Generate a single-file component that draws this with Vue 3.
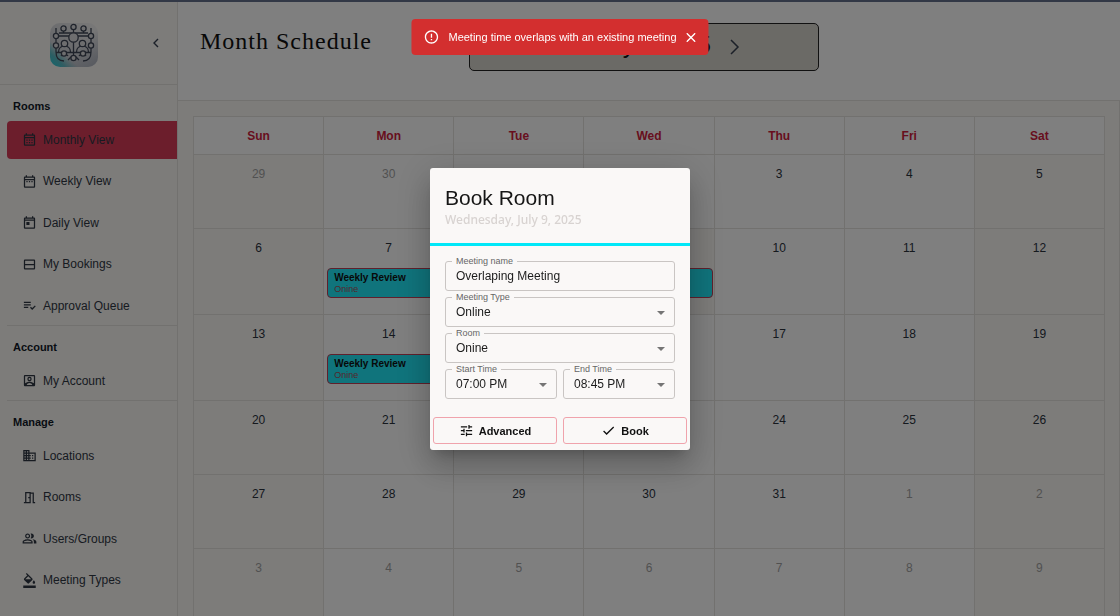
<script setup>
import { ref } from 'vue'

const icons = {
  month: 'M19 4h-1V2h-2v2H8V2H6v2H5c-1.11 0-1.99.9-1.99 2L3 20c0 1.1.89 2 2 2h14c1.1 0 2-.9 2-2V6c0-1.1-.9-2-2-2zm0 16H5V10h14v10zm0-12H5V6h14v2zM9 14H7v-2h2v2zm4 0h-2v-2h2v2zm4 0h-2v-2h2v2zm-8 4H7v-2h2v2zm4 0h-2v-2h2v2zm4 0h-2v-2h2v2z',
  week: 'M7 11h2v2H7v-2zm14-5v14c0 1.1-.9 2-2 2H5c-1.11 0-2-.9-2-2l.01-14c0-1.1.88-2 1.99-2h1V2h2v2h8V2h2v2h1c1.1 0 2 .9 2 2zM5 8h14V6H5v2zm14 12V10H5v10h14zm-4-7h2v-2h-2v2zm-4 0h2v-2h-2v2z',
  day: 'M19 4h-1V2h-2v2H8V2H6v2H5c-1.11 0-1.99.9-1.99 2L3 20c0 1.1.89 2 2 2h14c1.1 0 2-.9 2-2V6c0-1.1-.9-2-2-2zm0 16H5V9h14v11zm0-13H5V6h14v1zM7 11h5v5H7z',
  bookings: 'M19 4H5c-1.1 0-2 .9-2 2v12c0 1.1.9 2 2 2h14c1.1 0 2-.9 2-2V6c0-1.1-.9-2-2-2zM5 6h14v5H5zM5 13h14v5H5z',
  queue: 'M3 10h11v2H3zm0-4h11v2H3zm0 8h7v2H3zm17.59-2.07-4.25 4.24-2.12-2.12-1.41 1.41L16.34 19 22 13.34z',
  account: 'M19 3H5c-1.1 0-2 .9-2 2v14c0 1.1.9 2 2 2h14c1.1 0 2-.9 2-2V5c0-1.100-.9-2-2-2zM5 5h14v11.500C17.200 14.900 14.700 14 12 14s-5.200.9-7 2.500zM7.500 19c1-1.800 2.600-3 4.500-3s3.500 1.200 4.500 3zM12 6a3.500 3.500 0 1 0 0 7 3.500 3.500 0 0 0 0-7zM12 8a1.500 1.500 0 1 1 0 3 1.500 1.500 0 0 1 0-3z',
  locations: 'M12 7V3H2v18h20V7H12zM6 19H4v-2h2v2zm0-4H4v-2h2v2zm0-4H4V9h2v2zm0-4H4V5h2v2zm4 12H8v-2h2v2zm0-4H8v-2h2v2zm0-4H8V9h2v2zm0-4H8V5h2v2zm10 12h-8v-2h2v-2h-2v-2h2v-2h-2V9h8v10zm-2-8h-2v2h2v-2zm0 4h-2v2h2v-2z',
  rooms: 'M14 6v15H3v-2h2V3h9v1h5v15h2v2h-4V6h-3zM7 5v14h5V5zM10 11h2v2h-2z',
  users: 'M16.67 13.13C18.04 14.06 19 15.32 19 17v3h4v-3c0-2.18-3.57-3.47-6.33-3.87zM15 12c2.21 0 4-1.79 4-4s-1.79-4-4-4c-.47 0-.91.1-1.33.24C14.5 5.27 15 6.58 15 8s-.5 2.73-1.33 3.76c.42.14.86.24 1.33.24zM9 12c2.21 0 4-1.79 4-4s-1.79-4-4-4-4 1.79-4 4 1.79 4 4 4zm0-6c1.1 0 2 .9 2 2s-.9 2-2 2-2-.9-2-2 .9-2 2-2zm0 7c-2.67 0-8 1.34-8 4v3h16v-3c0-2.66-5.33-4-8-4zm6 5H3v-.99C3.2 16.29 6.3 15 9 15s5.8 1.29 6 2v1z',
  fill: 'M16.56 8.94L7.62 0 6.21 1.41l2.38 2.38-5.15 5.15c-.59.59-.59 1.54 0 2.12l5.5 5.5c.29.29.68.44 1.06.44s.77-.15 1.06-.44l5.5-5.5c.59-.58.59-1.53 0-2.12zM5.21 10L10 5.21 14.79 10H5.21zM19 11.5s-2 2.17-2 3.5c0 1.1.9 2 2 2s2-.9 2-2c0-1.33-2-3.5-2-3.5zM2 20h20v4H2v-4z',
  box: 'M3 3h18v18H3zM5 5h14v14H5z'
}

const groups = [
  {
    title: 'Rooms',
    items: [
      { label: 'Monthly View', icon: 'month', active: true },
      { label: 'Weekly View', icon: 'week' },
      { label: 'Daily View', icon: 'day' },
      { label: 'My Bookings', icon: 'bookings' },
      { label: 'Approval Queue', icon: 'queue' }
    ]
  },
  { title: 'Account', items: [{ label: 'My Account', icon: 'account' }] },
  {
    title: 'Manage',
    items: [
      { label: 'Locations', icon: 'locations' },
      { label: 'Rooms', icon: 'rooms' },
      { label: 'Users/Groups', icon: 'users' },
      { label: 'Meeting Types', icon: 'fill' },
      { label: '', icon: 'box' }
    ]
  }
]

const weekdays = ['Sun', 'Mon', 'Tue', 'Wed', 'Thu', 'Fri', 'Sat']
const events = { 7: true, 9: true, 14: true }

// Six weeks, starting on Sunday, June 29
const weeks = Array.from({ length: 6 }, (_, w) =>
  Array.from({ length: 7 }, (_, d) => {
    const n = w * 7 + d - 1
    const inMonth = n >= 1 && n <= 31
    const date = n < 1 ? n + 30 : n > 31 ? n - 31 : n
    return { date, inMonth, shaded: d === 0 || d === 6 || n === 9, event: inMonth && events[n] }
  })
)

const meetingName = ref('Overlaping Meeting')
const meetingType = ref('Online')
const room = ref('Onine')
const startTime = ref('07:00 PM')
const endTime = ref('08:45 PM')
</script>

<template>
  <div class="app">
    <div class="strip"></div>
    <div class="shell">
      <aside class="sidebar">
        <div class="brand">
          <svg class="logo" viewBox="0 0 50 46" aria-label="Logo">
            <defs>
              <linearGradient id="tile" x1="0" y1="1" x2="1" y2="0">
                <stop offset="0" stop-color="#20d0dc" />
                <stop offset=".16" stop-color="#58bcc6" />
                <stop offset=".3" stop-color="#cfd1d6" />
                <stop offset="1" stop-color="#f4f3f2" />
              </linearGradient>
              <linearGradient id="edge" x1="0" y1="0" x2="1" y2="1">
                <stop offset=".55" stop-color="#a0a6b4" stop-opacity="0" />
                <stop offset="1" stop-color="#a0a6b4" stop-opacity=".8" />
              </linearGradient>
            </defs>
            <rect x="1" y="1" width="48" height="44" rx="10" fill="url(#tile)" />
            <rect x="1" y="1" width="48" height="44" rx="10" fill="url(#edge)" />
            <g fill="none" stroke="#3f4757" stroke-width="1.3">
              <path d="M7 6v24c0 6 3 9 8 9M42 6v24c0 6-3 9-8 9M14.500 8v3M34.500 8v3M24.500 7v4M10 11h29M10 14h10M29 14h10M24.500 20v14M7 30.500h35" />
              <path d="M9.500 30c0-4 3-6 6-6s6 2 6 6M27.500 30c0-4 3-6 6-6s6 2 6 6M12 34c1-2 6-2 7 0M30 34c1-2 6-2 7 0M19 38l3-3M30 38l-3-3" />
              <g fill="#dddddf">
                <circle cx="14.500" cy="6.500" r="2.600" />
                <circle cx="24.500" cy="5" r="2.600" />
                <circle cx="34.500" cy="6.500" r="2.600" />
                <circle cx="24.500" cy="15.500" r="4.700" />
                <circle cx="7" cy="14" r="2.600" />
                <circle cx="42" cy="14" r="2.600" />
                <circle cx="7" cy="23.500" r="2.600" />
                <circle cx="42" cy="23.500" r="2.600" />
                <circle cx="15.500" cy="21.500" r="3.200" />
                <circle cx="33.500" cy="21.500" r="3.200" />
                <circle cx="15" cy="31.500" r="2.600" />
                <circle cx="34" cy="31.500" r="2.600" />
                <circle cx="24.500" cy="36" r="2.600" />
              </g>
            </g>
          </svg>
          <button class="collapse" aria-label="Collapse sidebar">
            <svg width="8" height="10" viewBox="0 0 8 10"><path d="M6 1 2 5l4 4" fill="none" stroke="currentColor" stroke-width="1.400" /></svg>
          </button>
        </div>
        <nav v-for="g in groups" :key="g.title" class="group">
          <h2>{{ g.title }}</h2>
          <ul :class="{ long: g.items.length > 1 }">
            <li v-for="i in g.items" :key="i.icon">
              <a href="#" :class="{ active: i.active }">
                <svg width="15" height="15" viewBox="0 0 24 24"><path :d="icons[i.icon]" fill="currentColor" fill-rule="evenodd" /></svg>
                {{ i.label }}
              </a>
            </li>
          </ul>
        </nav>
      </aside>

      <main class="main">
        <header class="top">
          <h1>Month Schedule</h1>
          <div class="switcher">
            <button aria-label="Previous month">
              <svg width="10" height="16" viewBox="0 0 10 16"><path d="M8 1 2 8l6 7" fill="none" stroke="currentColor" stroke-width="1.500" /></svg>
            </button>
            <span>July 2025</span>
            <button aria-label="Next month">
              <svg width="10" height="16" viewBox="0 0 10 16"><path d="m1 1 7 7-7 7" fill="none" stroke="currentColor" stroke-width="1.500" /></svg>
            </button>
          </div>
        </header>
        <section class="board">
          <table>
            <thead>
              <tr><th v-for="d in weekdays" :key="d" scope="col">{{ d }}</th></tr>
            </thead>
            <tbody>
              <tr v-for="(week, w) in weeks" :key="w" :class="{ busy: week.some(c => c.event) }">
                <td v-for="(c, d) in week" :key="d" :class="{ shaded: c.shaded, outside: !c.inMonth }">
                  <div class="date">{{ c.date }}</div>
                  <div v-if="c.event" class="event">
                    <strong>Weekly Review</strong>
                    <small>Onine</small>
                  </div>
                </td>
              </tr>
            </tbody>
          </table>
        </section>
      </main>
    </div>

    <div class="backdrop">
      <form class="dialog" role="dialog" aria-labelledby="dialog-title" @submit.prevent>
        <header>
          <h2 id="dialog-title">Book Room</h2>
          <p>Wednesday, July 9, 2025</p>
        </header>
        <div class="fields">
          <div class="field wide">
            <label for="name">Meeting name</label>
            <input id="name" v-model="meetingName" type="text" />
          </div>
          <div class="field wide">
            <label for="type">Meeting Type</label>
            <select id="type" v-model="meetingType"><option>Online</option></select>
            <i class="caret"></i>
          </div>
          <div class="field wide">
            <label for="room">Room</label>
            <select id="room" v-model="room"><option>Onine</option></select>
            <i class="caret"></i>
          </div>
          <div class="field">
            <label for="start">Start Time</label>
            <select id="start" v-model="startTime"><option>07:00 PM</option></select>
            <i class="caret"></i>
          </div>
          <div class="field">
            <label for="end">End Time</label>
            <select id="end" v-model="endTime"><option>08:45 PM</option></select>
            <i class="caret"></i>
          </div>
        </div>
        <footer>
          <button type="button">
            <svg width="15" height="15" viewBox="0 0 24 24"><path fill="currentColor" d="M3 17v2h6v-2H3zM3 5v2h10V5H3zm10 16v-2h8v-2h-8v-2h-2v6h2zM7 9v2H3v2h4v2h2V9H7zm14 4v-2H11v2h10zm-6-4h2V7h4V5h-4V3h-2v6z" /></svg>
            Advanced
          </button>
          <button type="submit">
            <svg width="15" height="15" viewBox="0 0 24 24"><path fill="currentColor" d="M9 16.170 4.830 12l-1.420 1.410L9 19 21 7l-1.410-1.410z" /></svg>
            Book
          </button>
        </footer>
      </form>
    </div>

    <div class="toast" role="alert">
      <svg width="16" height="16" viewBox="0 0 24 24"><path fill="currentColor" d="M11 15h2v2h-2zm0-8h2v6h-2zm.99-5C6.470 2 2 6.480 2 12s4.470 10 9.990 10C17.520 22 22 17.520 22 12S17.520 2 11.990 2zM12 20c-4.420 0-8-3.580-8-8s3.580-8 8-8 8 3.580 8 8-3.580 8-8 8z" /></svg>
      <span>Meeting time overlaps with an existing meeting</span>
      <button aria-label="Close">
        <svg width="9" height="9" viewBox="0 0 9 9"><path d="m0 0 9 9M9 0 0 9" fill="none" stroke="currentColor" stroke-width="1.400" /></svg>
      </button>
    </div>
  </div>
</template>

<style>
body {
  margin: 0;
}
</style>

<style scoped>
* {
  box-sizing: border-box;
}
.app {
  height: 100vh;
  overflow: hidden;
  display: flex;
  flex-direction: column;
  font-family: "Liberation Sans", Arial, sans-serif;
  font-size: 12px;
  color: #2a323d;
  background: #faf8f5;
}
h1, h2, p, ul {
  margin: 0;
  padding: 0;
}
button {
  font: inherit;
  color: inherit;
  background: none;
  border: 0;
  padding: 0;
  display: inline-flex;
  align-items: center;
  justify-content: center;
}
svg {
  display: block;
  flex: none;
}
.strip {
  flex: none;
  height: 2px;
  background: #64708c;
}
.shell {
  flex: 1;
  min-height: 0;
  display: flex;
}

.sidebar {
  flex: none;
  width: 178px;
  padding-left: 7px;
  overflow: hidden;
  border-right: 1px solid #e4e2df;
}
.brand {
  height: 83px;
  margin-left: -7px;
  padding: 3px 16px 0 49px;
  display: flex;
  align-items: center;
  justify-content: space-between;
  border-bottom: 1px solid #e4e2df;
}
.logo {
  width: 50px;
  height: 46px;
}
.collapse {
  width: 10px;
  height: 16px;
  margin-bottom: 4px;
  color: #374151;
}
.group + .group {
  border-top: 1px solid #e4e2df;
}
.group h2 {
  height: 36px;
  padding: 3px 0 0 6px;
  font-size: 11px;
  line-height: 36px;
  color: #111827;
}
.group ul {
  list-style: none;
  display: flex;
  flex-direction: column;
  justify-content: space-between;
}
.group ul.long {
  height: 204px;
}
.group a {
  height: 38px;
  padding: 0 0 1px 15px;
  display: flex;
  align-items: center;
  gap: 6px;
  color: #2f3743;
  text-decoration: none;
  border-radius: 4px 0 0 4px;
}
.group a.active {
  background: #d83c59;
}

.main {
  flex: 1;
  min-width: 0;
  display: flex;
  flex-direction: column;
}
.top {
  flex: none;
  height: 99px;
  padding: 21px 32px 0 22px;
  display: grid;
  grid-template-columns: 1fr 350px 1fr;
  align-items: start;
  background: #fff;
  border-bottom: 1px solid #e4e2df;
}
h1 {
  font: 400 24px/36px "Liberation Serif", "Times New Roman", serif;
  letter-spacing: 1px;
  white-space: nowrap;
  color: #111;
}
.switcher {
  height: 48px;
  display: flex;
  align-items: center;
  justify-content: center;
  gap: 18px;
  background: #d7d4cc;
  border: 1px solid #222;
  border-radius: 5px;
  font: 400 25px/32px "Liberation Mono", "Courier New", monospace;
  color: #111;
}
.switcher button {
  color: #374151;
}
.board {
  flex: 1;
  padding: 15px 14px 15px 15px;
  border-right: 1px solid #e4e2df;
}
table {
  width: 100%;
  table-layout: fixed;
  border-collapse: collapse;
  background: #fff;
}
th, td {
  padding: 0;
  border: 1px solid #e4e2df;
}
th {
  height: 38px;
  font-size: 12px;
  color: #d01c3c;
}
td {
  height: 74px;
  vertical-align: top;
}
.busy td {
  height: 86px;
}
.shaded {
  background: #faf8f5;
}
.date {
  height: 37px;
  line-height: 38px;
  text-align: center;
}
.outside .date {
  color: #a3a3a3;
}
.event {
  height: 30px;
  margin: 2px 1px 0 3px;
  padding: 3px 6px;
  background: #20e8f8;
  border: 1px solid #c04058;
  border-radius: 4px;
  color: #111;
}
.event strong, .event small {
  display: block;
}
.event strong {
  font-size: 10px;
  line-height: 12px;
  font-weight: 700;
}
.event small {
  font-size: 9px;
  line-height: 10px;
  color: #a0525a;
}

.backdrop {
  position: fixed;
  inset: 0;
  padding-top: 2px;
  display: flex;
  align-items: center;
  justify-content: center;
  background: rgba(0, 0, 0, 0.5);
}
.dialog {
  width: 260px;
  background: #faf8f7;
  border-radius: 3px;
  box-shadow: 0 9px 12px -6px rgba(0, 0, 0, 0.2), 0 18px 30px 2px rgba(0, 0, 0, 0.14), 0 7px 36px 6px rgba(0, 0, 0, 0.12);
}
.dialog header {
  height: 78px;
  padding: 17px 15px 0;
  border-bottom: 3px solid #00e8f8;
}
.dialog h2 {
  font-size: 21px;
  line-height: 26px;
  font-weight: 400;
  color: #161616;
}
.dialog p {
  font: 500 12px/18px "Noto Sans", sans-serif;
  color: #d8d3d1;
}
.fields {
  padding: 15px 15px 18px;
  display: grid;
  grid-template-columns: 1fr 1fr;
  gap: 6px;
}
.field {
  position: relative;
  height: 30px;
}
.field.wide {
  grid-column: 1 / -1;
}
.field label {
  position: absolute;
  top: -5px;
  left: 7px;
  padding: 0 4px;
  font-size: 9px;
  line-height: 10px;
  color: #666;
  background: #faf8f7;
}
.field input, .field select {
  width: 100%;
  height: 100%;
  padding: 0 10px;
  font: 400 12px/16px "Liberation Sans", Arial, sans-serif;
  color: #1c1c1c;
  background: transparent;
  border: 1px solid #c9c5c3;
  border-radius: 3px;
  appearance: none;
}
.caret {
  position: absolute;
  right: 10px;
  top: 14px;
  border: 4px solid transparent;
  border-top-color: #757575;
  border-bottom: 0;
  pointer-events: none;
}
.dialog footer {
  padding: 0 3px 6px;
  display: grid;
  grid-template-columns: 1fr 1fr;
  gap: 6px;
}
.dialog footer button {
  height: 27px;
  gap: 5px;
  font-size: 11px;
  font-weight: 700;
  color: #111;
  border: 1px solid #f0a3ac;
  border-radius: 3px;
}

.toast {
  position: fixed;
  top: 19px;
  left: 50%;
  transform: translateX(-50%);
  height: 36px;
  padding: 0 13px 0 12px;
  display: flex;
  align-items: center;
  white-space: nowrap;
  font-size: 11px;
  color: #fff;
  background: #d32f2f;
  border-radius: 4px;
}
.toast span {
  margin: 0 10px 0 9px;
}
</style>
